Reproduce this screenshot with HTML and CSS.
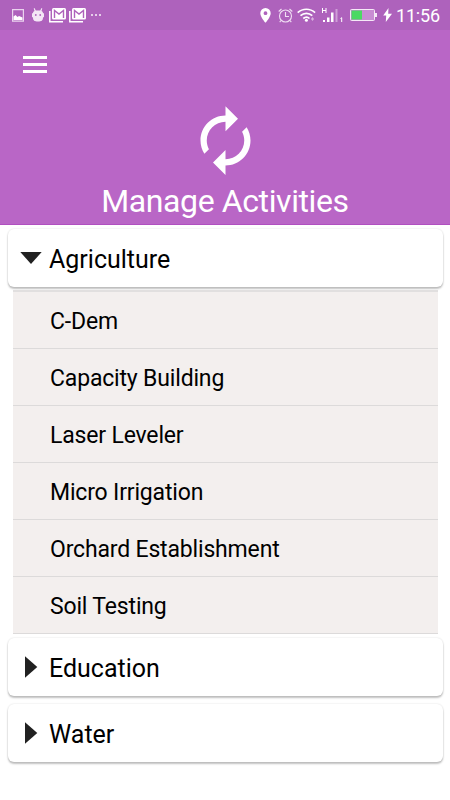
FILE: index.html
```html
<!DOCTYPE html>
<html lang="en">
<head>
    <meta charset="UTF-8">
    <meta name="viewport" content="width=device-width, initial-scale=1.0">
    <title>Manage Activities</title>
    <link rel="stylesheet" href="styles.css">
</head>
<body>

<div class="status-bar">
    <div class="status-left">
        <svg class="picture" width="12" height="13" viewBox="0 0 12 13"><path d="M.6.6h10.8v11.6H.6z" fill="none" stroke="#ead3ee" stroke-width="1.2"/><path d="M1.500 11V7.500l2-1.500 2 2 1.500-1 3.500 1.500V11z" fill="#fff"/></svg>
        <svg class="android" width="12" height="14" viewBox="0 0 12 14"><path d="M2.500 0l1.300 2.500h4.400L9.500 0l.8.4-.8 2.500C11 3.500 11 4.500 11 5.500l1-.5v4l-1 .5c0 3-1.500 4-5 4s-5-1-5-4L0 9V5l1 .5c0-1 0-2 1.500-2.600L1.700.4z" fill="#f3e6f5"/><circle cx="3.800" cy="7" r=".9" fill="#ae62bc"/><circle cx="8.200" cy="7" r=".9" fill="#ae62bc"/></svg>
        <svg class="mail" width="17" height="15" viewBox="0 0 17 15"><path d="M.8 3v10.700H14" fill="none" stroke="#fff" stroke-width="1.500"/><rect x="3" y="0" width="14" height="11.500" rx="1.500" fill="#fff"/><path d="M5.500 10V2.500L10 6l4.500-3.500V10" fill="none" stroke="#ae62bc" stroke-width="1.400"/></svg>
        <svg class="mail" width="17" height="15" viewBox="0 0 17 15"><path d="M.8 3v10.700H14" fill="none" stroke="#fff" stroke-width="1.500"/><rect x="3" y="0" width="14" height="11.500" rx="1.500" fill="#fff"/><path d="M5.500 10V2.500L10 6l4.500-3.500V10" fill="none" stroke="#ae62bc" stroke-width="1.400"/></svg>
        <svg width="10" height="2" viewBox="0 0 10 2"><path d="M0 0h2v2H0zM4 0h2v2H4zM8 0h2v2H8z" fill="#e6cdea"/></svg>
    </div>
    <div class="status-right">
        <svg class="pin" width="11" height="15" viewBox="0 0 11 15"><path fill-rule="evenodd" d="M5.500 0A5.200 5.200 0 0 0 .3 5.200C.3 9 5.500 14.800 5.500 14.800S10.700 9 10.700 5.200A5.200 5.200 0 0 0 5.500 0zm0 3.300a1.900 1.900 0 1 1 0 3.800 1.900 1.900 0 0 1 0-3.800z" fill="#fff"/></svg>
        <svg class="alarm" width="15" height="15" viewBox="0 0 15 15" fill="none" stroke="#f0dff3" stroke-width="1.100"><circle cx="7.500" cy="8" r="6"/><path d="M7.500 4v4.500H11M.7 3.500L3.500 1M14.300 3.500L11.500 1M3 12.500l-1.300 1.700M12 12.500l1.300 1.700"/></svg>
        <svg class="wifi" width="19" height="14" viewBox="0 0 19 14"><g fill="none" stroke="#fff" stroke-width="1.700"><path d="M.7 4.700c5-4.600 12.400-4.600 17.400 0"/><path d="M3.500 7.700c3.500-3.100 8.300-3.100 11.800 0"/><path d="M6.300 10.500c2-1.700 4.400-1.700 6.200 0"/></g><circle cx="9.400" cy="12.300" r="1.500" fill="#fff"/><path d="M14 11l1.500-2 1.500 2-1.500 2z" fill="#d9b4df"/></svg>
        <svg class="signal" width="22" height="15" viewBox="0 0 22 15"><path d="M.5 0v5M4 0v5M.5 2.500H4" stroke="#fff"/><path d="M1 12h2v2H1zM5 9.500h2.500V14H5zM9 4.500h2.500V14H9z" fill="#fff"/><path d="M13.500 1h2v13h-2z" fill="#ce9fd7"/><path d="M18.500 10.500l1.200-.8V14" fill="none" stroke="#fff"/></svg>
        <svg class="battery" width="27" height="12" viewBox="0 0 27 12"><rect x=".5" y=".5" width="24" height="11" rx="1" fill="#c98dd3" stroke="#f5e9f7"/><path d="M1.500 1.500h10.500v9H1.500z" fill="#4bd963"/><path d="M25 4h2v4h-2z" fill="#f5e9f7"/></svg>
        <svg class="bolt" width="9" height="14" viewBox="0 0 9 14"><path d="M5.500 0L.2 7.500h3L2.800 14 9 5.800H5.200z" fill="#fff"/></svg>
        <span class="time">11:56</span>
    </div>
</div>

<div class="header">
    <div class="menu-btn"><span></span><span></span><span></span></div>
    <svg class="sync" width="75" height="75" viewBox="0 0 24 24"><path d="M12 6v3l4-4-4-4v3c-4.420 0-8 3.580-8 8 0 1.570.46 3.030 1.240 4.260L6.700 14.800c-.45-.83-.7-1.790-.7-2.800 0-3.310 2.690-6 6-6zm6.760 1.740L17.300 9.200c.44.840.7 1.790.7 2.800 0 3.310-2.690 6-6 6v-3l-4 4 4 4v-3c4.420 0 8-3.580 8-8 0-1.570-.46-3.030-1.240-4.260z" fill="#fff"/></svg>
    <h1>Manage Activities</h1>
</div>

<div class="list">
    <div class="card">
        <svg class="arrow" width="22" height="22" viewBox="0 0 22 22"><path d="M.3 5h21.400L11 17z" fill="#212121"/></svg>
        <span>Agriculture</span>
    </div>
    <ul class="items">
        <li>C-Dem</li>
        <li>Capacity Building</li>
        <li>Laser Leveler</li>
        <li>Micro Irrigation</li>
        <li>Orchard Establishment</li>
        <li>Soil Testing</li>
    </ul>
    <div class="card">
        <svg class="arrow" width="22" height="22" viewBox="0 0 22 22"><path d="M5 .3v21.400L17.300 11z" fill="#212121"/></svg>
        <span>Education</span>
    </div>
    <div class="card">
        <svg class="arrow" width="22" height="22" viewBox="0 0 22 22"><path d="M5 .3v21.400L17.300 11z" fill="#212121"/></svg>
        <span>Water</span>
    </div>
</div>

</body>
</html>
```
FILE: styles.css
```css
body {
    background-color: #fff;
    color: #000;
    font-family: Roboto, sans-serif;
    margin: 0;
    padding: 0;
}
svg {
    display: block;
    flex: none;
}
.status-bar {
    display: flex;
    justify-content: space-between;
    height: 30px;
    padding: 0 10px 0 12px;
    background-color: #ae62bc;
    color: #fff;
}
.status-left, .status-right {
    display: flex;
    align-items: center;
}
.picture {
    margin-right: 8px;
}
.android {
    margin-right: 5px;
}
.mail {
    margin-right: 3px;
}
.mail:nth-child(4) {
    margin-right: 5px;
}
.pin {
    margin-right: 7px;
}
.alarm {
    margin-right: 4px;
}
.wifi {
    margin-right: 6px;
}
.signal {
    margin-right: 6px;
}
.battery {
    margin-right: 6px;
}
.bolt {
    margin-right: 4px;
}
.time {
    width: 44px;
    font-size: 18px;
    letter-spacing: -0.2px;
    line-height: 30px;
    padding-top: 2px;
    white-space: nowrap;
}
.header {
    display: flex;
    flex-direction: column;
    align-items: center;
    height: 194px;
    background-color: #b966c6;
    border-bottom: 1px solid #b04fc0;
    color: #fff;
}
.menu-btn {
    display: flex;
    flex-direction: column;
    align-self: flex-start;
    gap: 4px;
    margin: 26px 0 0 23px;
}
.menu-btn span {
    width: 24px;
    height: 3px;
    background-color: #fff;
}
.sync {
    margin-top: 30px;
}
h1 {
    margin: 4px 0 0;
    font-size: 32px;
    font-weight: 400;
    letter-spacing: -0.4px;
    line-height: 38px;
}
.list {
    padding: 4px 7px 0 8px;
}
.card {
    display: flex;
    align-items: center;
    gap: 7px;
    height: 58px;
    margin-bottom: 8px;
    padding: 0 12px;
    border-radius: 6px;
    background-color: #fff;
    box-shadow: 0 2px 2px rgba(0, 0, 0, 0.24), 0 0 2px rgba(0, 0, 0, 0.14);
    font-size: 25px;
}
.card span {
    padding-top: 2px;
}
.items {
    list-style: none;
    margin: -5px 5px 4px;
    padding: 0;
    border-top: 2px solid #e1dfdf;
    background-color: #f3efee;
}
.items li {
    height: 56px;
    padding-left: 37px;
    border-bottom: 1px solid #dcdada;
    font-size: 23px;
    letter-spacing: -0.17px;
    line-height: 60px;
}
```
